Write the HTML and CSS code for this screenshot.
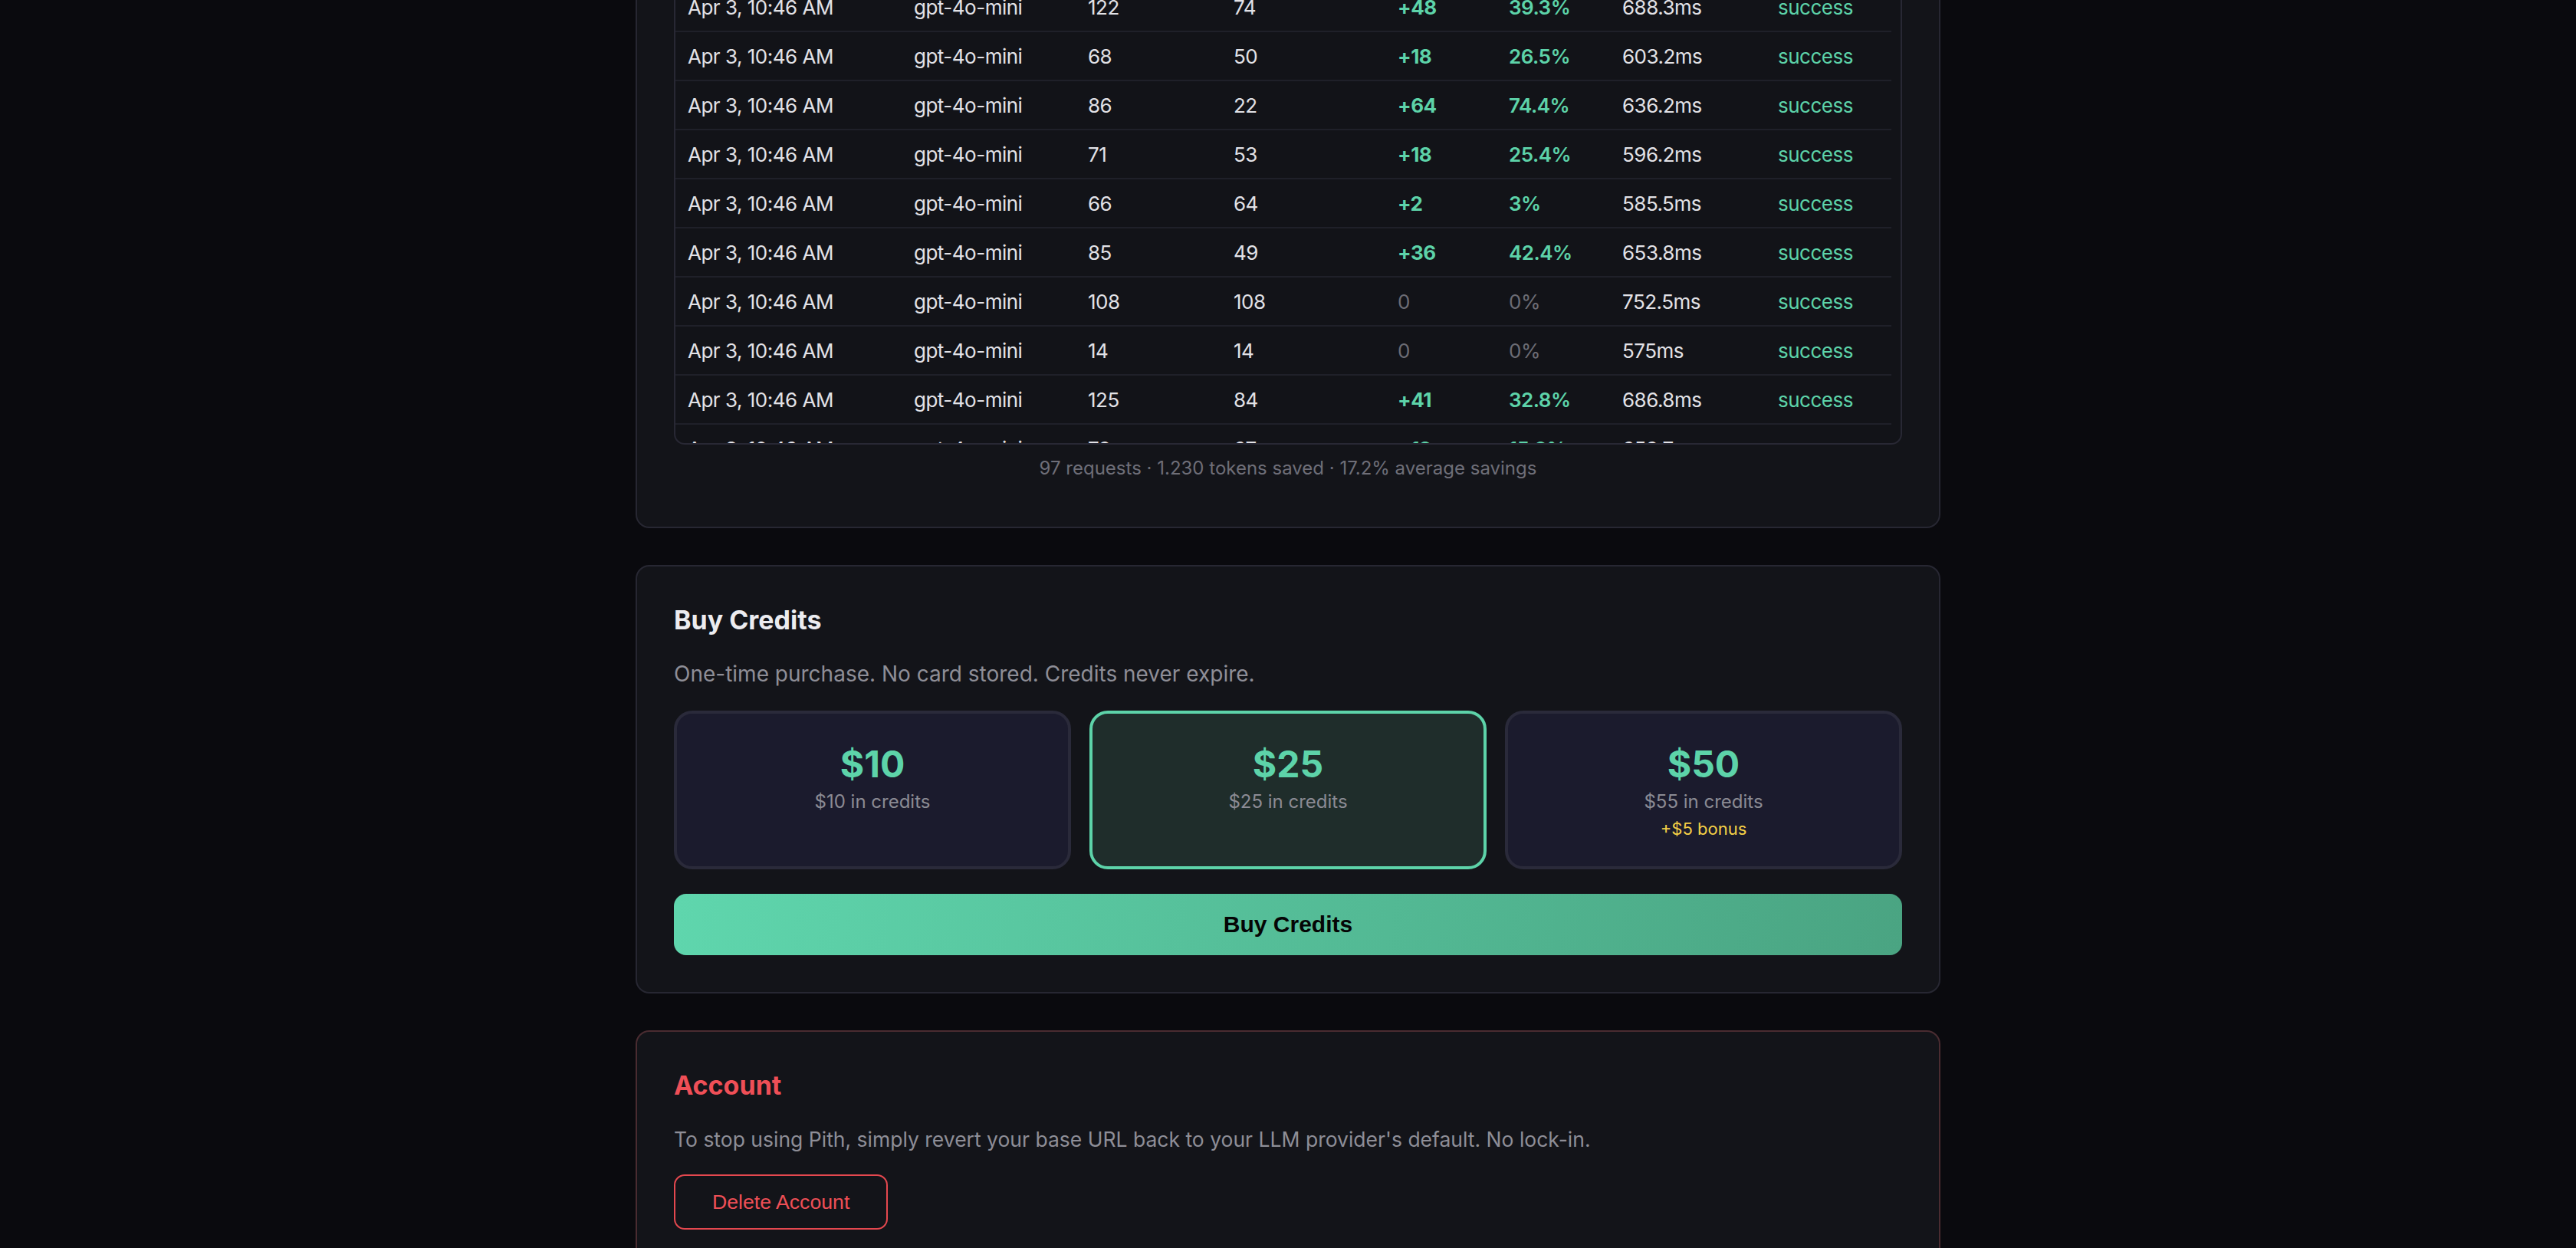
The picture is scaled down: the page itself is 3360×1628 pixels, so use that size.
FILE: index.html
```html
<!DOCTYPE html>
<html>
<head>
  <title>Pith Dashboard</title>
  <link rel="stylesheet" href="styles.css">
</head>
<body>
  <main class="page">

    <section class="card">
      <div class="log-wrap">
        <table class="log-table">
          <colgroup>
            <col style="width: 295px">
            <col style="width: 227px">
            <col style="width: 190px">
            <col style="width: 214px">
            <col style="width: 145px">
            <col style="width: 148px">
            <col style="width: 203px">
            <col>
          </colgroup>
          <tbody>
            <tr><td>Apr 3, 10:46 AM</td><td>gpt-4o-mini</td><td>122</td><td>74</td><td class="delta">+48</td><td class="pct">39.3%</td><td>688.3ms</td><td class="ok">success</td></tr>
            <tr><td>Apr 3, 10:46 AM</td><td>gpt-4o-mini</td><td>68</td><td>50</td><td class="delta">+18</td><td class="pct">26.5%</td><td>603.2ms</td><td class="ok">success</td></tr>
            <tr><td>Apr 3, 10:46 AM</td><td>gpt-4o-mini</td><td>86</td><td>22</td><td class="delta">+64</td><td class="pct">74.4%</td><td>636.2ms</td><td class="ok">success</td></tr>
            <tr><td>Apr 3, 10:46 AM</td><td>gpt-4o-mini</td><td>71</td><td>53</td><td class="delta">+18</td><td class="pct">25.4%</td><td>596.2ms</td><td class="ok">success</td></tr>
            <tr><td>Apr 3, 10:46 AM</td><td>gpt-4o-mini</td><td>66</td><td>64</td><td class="delta">+2</td><td class="pct">3%</td><td>585.5ms</td><td class="ok">success</td></tr>
            <tr><td>Apr 3, 10:46 AM</td><td>gpt-4o-mini</td><td>85</td><td>49</td><td class="delta">+36</td><td class="pct">42.4%</td><td>653.8ms</td><td class="ok">success</td></tr>
            <tr><td>Apr 3, 10:46 AM</td><td>gpt-4o-mini</td><td>108</td><td>108</td><td class="none">0</td><td class="none">0%</td><td>752.5ms</td><td class="ok">success</td></tr>
            <tr><td>Apr 3, 10:46 AM</td><td>gpt-4o-mini</td><td>14</td><td>14</td><td class="none">0</td><td class="none">0%</td><td>575ms</td><td class="ok">success</td></tr>
            <tr><td>Apr 3, 10:46 AM</td><td>gpt-4o-mini</td><td>125</td><td>84</td><td class="delta">+41</td><td class="pct">32.8%</td><td>686.8ms</td><td class="ok">success</td></tr>
            <tr><td>Apr 3, 10:46 AM</td><td>gpt-4o-mini</td><td>79</td><td>67</td><td class="delta">+12</td><td class="pct">15.2%</td><td>659.7ms</td><td class="ok">success</td></tr>
          </tbody>
        </table>
      </div>
      <p class="log-summary">97 requests · 1.230 tokens saved · 17.2% average savings</p>
    </section>

    <section class="card">
      <h2 class="card-title">Buy Credits</h2>
      <p class="card-text">One-time purchase. No card stored. Credits never expire.</p>
      <div class="packs">
        <div class="pack">
          <div class="pack-price">$10</div>
          <div class="pack-credits">$10 in credits</div>
        </div>
        <div class="pack selected">
          <div class="pack-price">$25</div>
          <div class="pack-credits">$25 in credits</div>
        </div>
        <div class="pack">
          <div class="pack-price">$50</div>
          <div class="pack-credits">$55 in credits</div>
          <div class="pack-bonus">+$5 bonus</div>
        </div>
      </div>
      <button class="buy-btn">Buy Credits</button>
    </section>

    <section class="card danger">
      <h2 class="card-title">Account</h2>
      <p class="card-text">To stop using Pith, simply revert your base URL back to your LLM provider's default. No lock-in.</p>
      <button class="delete-btn">Delete Account</button>
    </section>

  </main>
</body>
</html>
```

FILE: styles.css
```css
body {
  margin: 0;
  background-color: #0a0a0e;
  font-family: Inter, "Noto Sans", sans-serif;
  color: #e2e2e7;
}
.page {
  width: 1702px;
  margin: -74px auto 0;
  display: flex;
  flex-direction: column;
  gap: 48px;
}
.card {
  background-color: #131419;
  border: 2px solid #272732;
  border-radius: 18px;
  padding: 48px;
}
.card.danger {
  border-color: #4a2c31;
}
.log-wrap {
  height: 600px;
  overflow: hidden;
  border: 2px solid #282834;
  border-radius: 14px;
  background-color: #121318;
}
.log-table {
  width: calc(100% - 12px);
  border-collapse: separate;
  border-spacing: 0;
  table-layout: fixed;
  font-size: 26px;
  letter-spacing: -0.5px;
}
.log-table td {
  height: 62px;
  padding: 0 16px;
  border-bottom: 2px solid #1f2029;
  white-space: nowrap;
  color: #e2e2e7;
}
.log-table .delta {
  color: #5dd3a9;
  font-weight: 700;
}
.log-table .pct {
  color: #5dd3a9;
  font-weight: 600;
}
.log-table .none {
  color: #6c6c74;
}
.log-table .ok {
  color: #5dd3a9;
}
.log-summary {
  margin: 15px 0 12px;
  text-align: center;
  font-size: 24px;
  line-height: 32px;
  color: #6e6e78;
}
.card-title {
  margin: 0 0 28px;
  font-size: 34px;
  line-height: 44px;
  font-weight: 700;
  color: #ececf0;
}
.danger .card-title {
  color: #ef4f57;
}
.card-text {
  margin: 0 0 28px;
  font-size: 28px;
  line-height: 40px;
  color: #8e8e97;
}
.danger .card-text {
  margin-bottom: 26px;
  font-size: 26.5px;
}
.packs {
  display: grid;
  grid-template-columns: repeat(3, 1fr);
  gap: 24px;
  margin-bottom: 32px;
}
.pack {
  background-color: #1b1b2d;
  border: 4px solid #2a2a3a;
  border-radius: 24px;
  padding: 36px 24px 33px;
  text-align: center;
}
.pack.selected {
  background-color: #1f2d2b;
  border-color: #5dd3a9;
}
.pack-price {
  font-size: 48px;
  line-height: 60px;
  font-weight: 700;
  color: #5dd3a9;
}
.pack-credits {
  margin-top: 2px;
  font-size: 24px;
  line-height: 34px;
  color: #8b8b94;
}
.pack-bonus {
  margin-top: 2px;
  font-size: 22px;
  line-height: 32px;
  color: #f4cf46;
}
.buy-btn {
  display: block;
  width: 100%;
  height: 80px;
  border: none;
  border-radius: 16px;
  background: linear-gradient(100deg, #5fd6ad, #4aa482);
  font-family: "Liberation Sans", Arial, sans-serif;
  font-size: 30px;
  font-weight: 700;
  color: #050505;
  cursor: pointer;
}
.delete-btn {
  height: 72px;
  padding: 0 48px;
  background: transparent;
  border: 2px solid #e5484f;
  border-radius: 14px;
  font-family: "Liberation Sans", Arial, sans-serif;
  font-size: 26.67px;
  color: #ee4f56;
  cursor: pointer;
}
```
